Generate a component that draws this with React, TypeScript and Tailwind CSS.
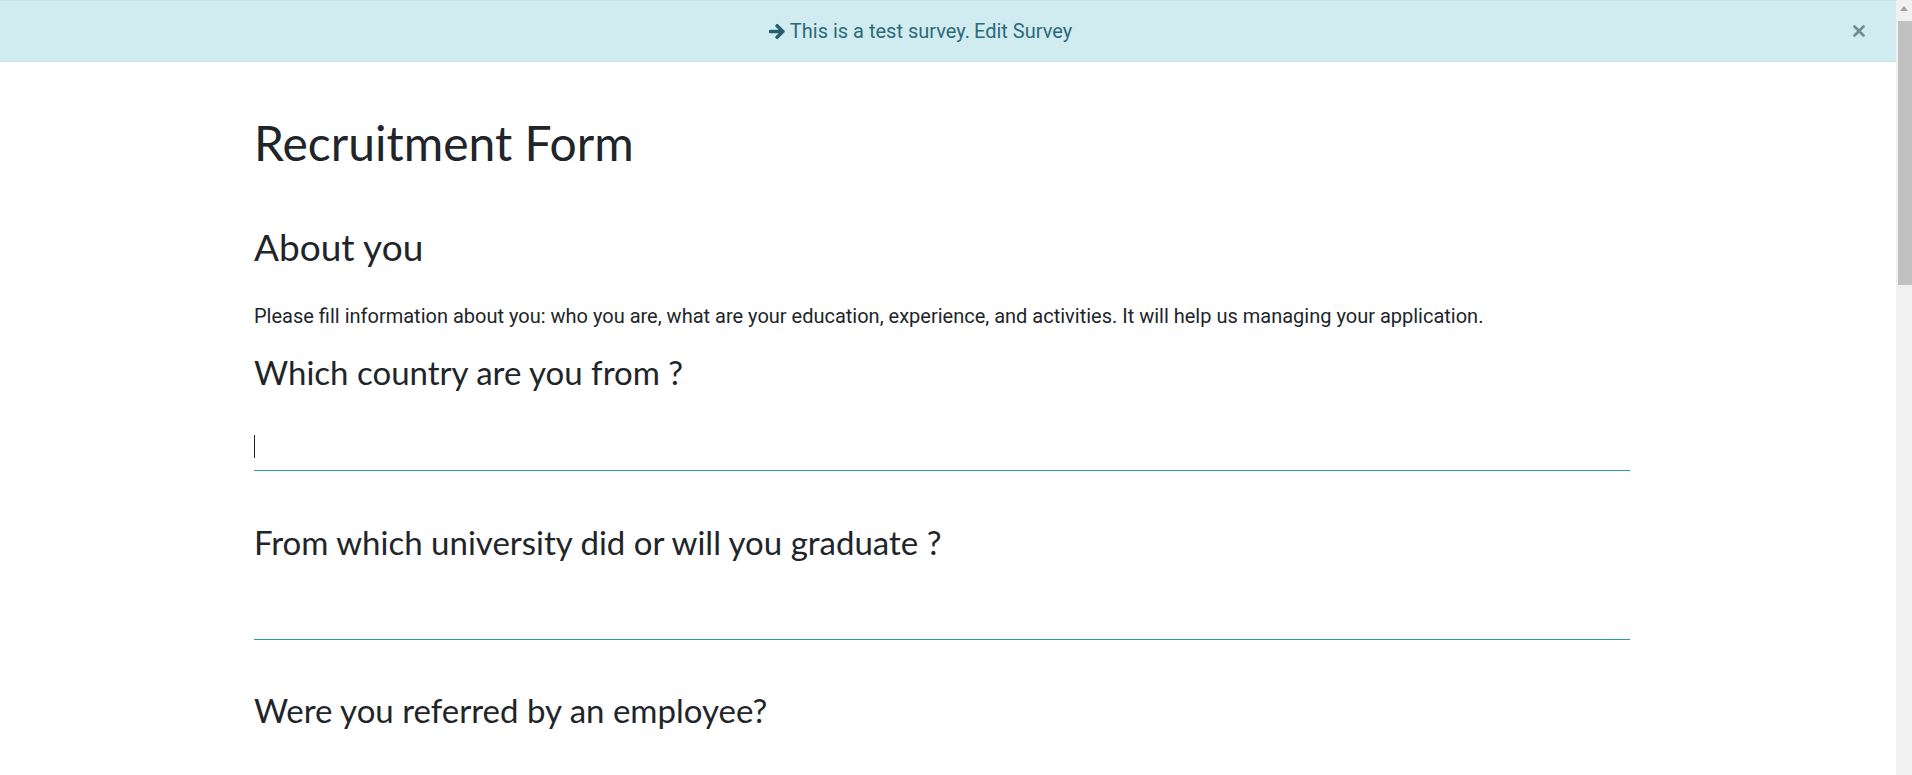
const heading = "font-['Lato','Noto_Sans',sans-serif] text-[#212529]";

function AnswerLine({ active }: { active?: boolean }) {
  return (
    <div className="flex h-[43px] items-start border-b border-[#2f9a9f] pt-[7px]">
      {active && <div className="h-[23px] w-px bg-[#212529]" />}
    </div>
  );
}

export default function App() {
  return (
    <div className="flex h-[775px] w-full overflow-hidden bg-white">
      <div className="flex-1">
        <div className="flex h-[62px] items-center border-y border-[#bee5eb] bg-[#d1ecf1] font-['Roboto',sans-serif] text-[20px] text-[#2b6a78]">
          <div className="flex flex-1 items-center justify-center gap-[4px] pr-[8px]">
            <svg viewBox="0 0 16 16" className="h-[17px] w-[17px]">
              <path
                d="M1 6.3 H9 L6.2 3.5 a1.2 1.2 0 0 1 0-1.7 l0.6-0.6 a1.2 1.2 0 0 1 1.7 0 L14.6 7.2 a1.2 1.2 0 0 1 0 1.6 L8.5 14.8 a1.2 1.2 0 0 1-1.7 0 l-0.6-0.6 a1.2 1.2 0 0 1 0-1.7 L9 9.7 H1 a1 1 0 0 1-1-1 V7.3 a1 1 0 0 1 1-1Z"
                fill="#245f6d"
              />
            </svg>
            <span>This is a test survey.</span>
            <span>Edit Survey</span>
          </div>
          <button className="mr-[27px] flex h-[20px] w-[20px] items-center justify-center">
            <svg viewBox="0 0 12 12" className="h-[12px] w-[12px]">
              <path d="M1.5 1.5 L10.5 10.5 M10.5 1.5 L1.5 10.5" stroke="#6c8d96" strokeWidth="2.6" strokeLinecap="round" />
            </svg>
          </button>
        </div>

        <div className="ml-[254px] w-[1376px]">
          <h1 className={`${heading} mt-[52px] text-[48px] leading-[58px] font-normal`}>
            Recruitment Form
          </h1>
          <h2 className={`${heading} mt-[52px] text-[37px] leading-[46px] font-normal`}>About you</h2>
          <p className="mt-[33px] font-['Roboto',sans-serif] text-[20px] leading-[27px] text-[#212529]">
            Please fill information about you: who you are, what are your education, experience, and
            activities. It will help us managing your application.
          </p>

          <h3 className={`${heading} mt-[22px] text-[33px] leading-[40px] font-normal`}>
            Which country are you from ?
          </h3>
          <div className="mt-[36px]">
            <AnswerLine active />
          </div>

          <h3 className={`${heading} mt-[51px] text-[33px] leading-[40px] font-normal`}>
            From which university did or will you graduate ?
          </h3>
          <div className="mt-[35px]">
            <AnswerLine />
          </div>

          <h3 className={`${heading} mt-[50px] text-[33px] leading-[40px] font-normal`}>
            Were you referred by an employee?
          </h3>
        </div>
      </div>

      <div className="flex w-[16px] flex-col items-end bg-[#f1f1f1]">
        <div className="flex h-[17px] w-[16px] items-center justify-center">
          <svg viewBox="0 0 8 5" className="h-[5px] w-[8px]">
            <path d="M0 5 L4 0 L8 5 Z" fill="#a3a3a3" />
          </svg>
        </div>
        <div className="mt-[4px] h-[264px] w-[14px] bg-[#c1c1c1]" />
      </div>
    </div>
  );
}
